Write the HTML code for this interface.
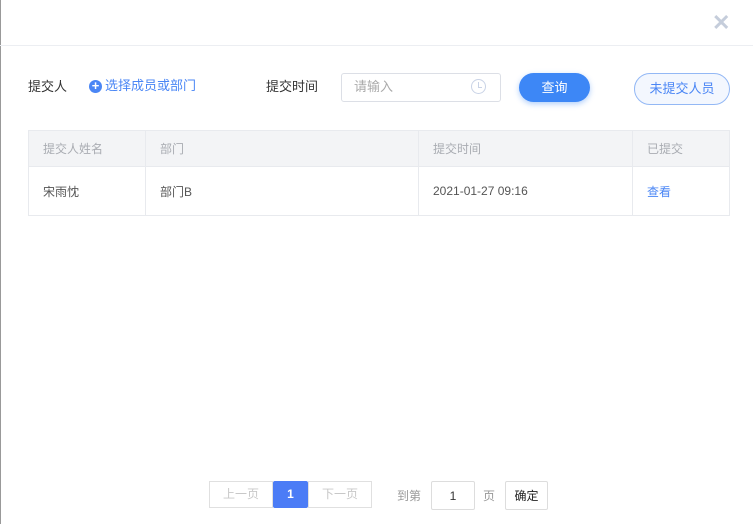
<!DOCTYPE html>
<html><head><meta charset="utf-8"><style>
*{margin:0;padding:0;box-sizing:border-box}
body{width:753px;height:524px;background:#fff;position:relative;overflow:hidden;font-family:"Liberation Sans","Noto Sans CJK SC",sans-serif;font-size:13px;color:#333}
.a{position:absolute}
.hd{left:0;top:45px;width:753px;height:1px;background:#eceef2}
.t{line-height:1}
table{position:absolute;left:28px;top:130px;width:702px;border-collapse:collapse;font-size:12px}
td{border:1px solid #e8eaee;padding:0 0 0 14px}
tr.h td{background:#f3f4f6;color:#a9acb2;height:36px}
tr.r td{height:49px;color:#555}
.pg{border:1px solid #e0e0e0;height:27px;top:481px;font-size:12px;color:#c8c8c8;text-align:center;line-height:25px}
</style></head><body>
<div class="a" style="left:0;top:0;width:1px;height:524px;background:#999"></div>
<div class="a" style="left:712px;top:10px;font-size:22px;color:#c5cddb;font-weight:bold">✕</div>
<div class="a hd"></div>
<div class="a t" style="left:28px;top:80px">提交人</div>
<div class="a" style="left:89px;top:80px;width:13px;height:13px;border-radius:50%;background:#4a86f5;color:#fff;font-size:13px;line-height:12px;text-align:center;font-weight:bold">+</div>
<div class="a t" style="left:105px;top:79px;color:#4a86f5">选择成员或部门</div>
<div class="a t" style="left:266px;top:80px">提交时间</div>
<div class="a" style="left:341px;top:73px;width:160px;height:29px;border:1px solid #dcdfe6;border-radius:3px"></div>
<div class="a t" style="left:354px;top:80px;color:#aaa">请输入</div>
<div class="a" style="left:471px;top:79px;width:15px;height:15px;border:1.5px solid #c9d3e6;border-radius:50%"></div>
<div class="a" style="left:478px;top:82px;width:4px;height:6px;border-left:1.5px solid #c9d3e6;border-bottom:1.5px solid #c9d3e6"></div>
<div class="a" style="left:519px;top:73px;width:71px;height:29px;border-radius:15px;background:#3d87f6;color:#fff;text-align:center;line-height:29px;box-shadow:0 2px 6px rgba(61,135,246,.4)">查询</div>
<div class="a" style="left:634px;top:73px;width:96px;height:32px;border-radius:16px;border:1px solid #93b8f5;background:#f3f7fe;color:#4a86f5;text-align:center;line-height:30px">未提交人员</div>
<table>
<tr class="h"><td style="width:117px">提交人姓名</td><td style="width:273px">部门</td><td style="width:214px">提交时间</td><td>已提交</td></tr>
<tr class="r"><td>宋雨忱</td><td>部门B</td><td>2021-01-27 09:16</td><td style="color:#4a86f5">查看</td></tr>
</table>
<div class="a pg" style="left:209px;width:64px">上一页</div>
<div class="a pg" style="left:273px;width:35px;background:#4b7cf6;border-color:#4b7cf6;color:#fff;font-weight:bold;border-radius:2px">1</div>
<div class="a pg" style="left:308px;width:64px">下一页</div>
<div class="a" style="left:397px;top:487px;font-size:12px;color:#999">到第</div>
<div class="a" style="left:431px;top:481px;width:44px;height:29px;border:1px solid #ddd;border-radius:2px;text-align:center;line-height:28px;font-size:12px">1</div>
<div class="a" style="left:483px;top:487px;font-size:12px;color:#999">页</div>
<div class="a" style="left:505px;top:481px;width:43px;height:29px;border:1px solid #ddd;border-radius:2px;text-align:center;line-height:28px;font-size:12px;color:#222">确定</div>
</body></html>
